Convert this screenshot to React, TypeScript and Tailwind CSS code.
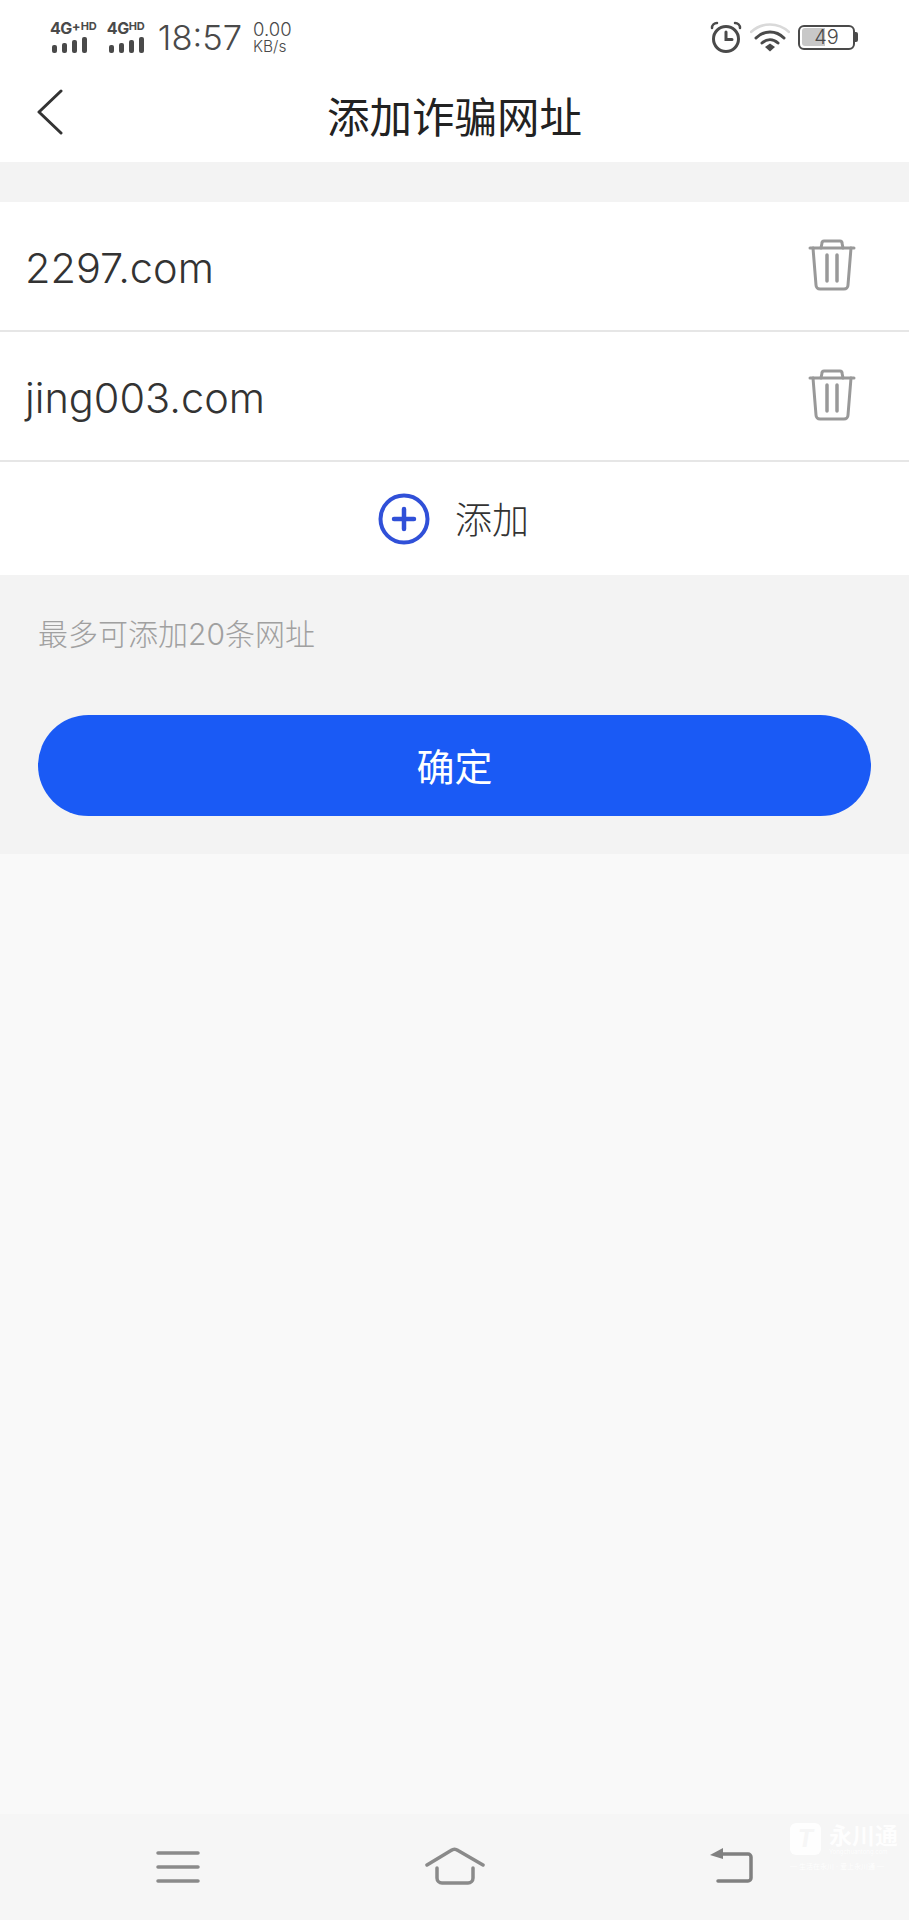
const cjk = { fontFamily: 'Inter, "Noto Sans CJK SC", sans-serif' };

function SignalBars() {
  return (
    <div className="mt-[1px] ml-[2px] flex items-end gap-[5px]">
      <span className="h-[8px] w-[5px] rounded-[2px] bg-[#4a4a4a]" />
      <span className="h-[10px] w-[5px] rounded-[2px] bg-[#4a4a4a]" />
      <span className="h-[13px] w-[5px] rounded-[2px] bg-[#4a4a4a]" />
      <span className="h-[16px] w-[5px] rounded-[2px] bg-[#4a4a4a]" />
    </div>
  );
}

function NetworkBadge({ plus }: { plus?: boolean }) {
  return (
    <div className="flex flex-col font-bold leading-none text-[#4a4a4a]">
      <div className="flex h-[15px] items-start">
        <span className="text-[16px] leading-[15px] tracking-[-0.5px]">4G</span>
        {plus && <span className="text-[13px] leading-[10px]">+</span>}
        <span className="text-[11px] leading-[10px]">HD</span>
      </div>
      <SignalBars />
    </div>
  );
}

function TrashIcon() {
  return (
    <svg width="48" height="52" viewBox="0 0 48 52" fill="none" stroke="#999999" strokeWidth="3" strokeLinecap="round" strokeLinejoin="round">
      <path d="M2 9h44" />
      <path d="M13 9l1-5a2 2 0 0 1 2-2h16a2 2 0 0 1 2 2l1 5" />
      <path d="M5 9l3 37a4 4 0 0 0 4 4h24a4 4 0 0 0 4-4l3-37" />
      <path d="M19 16v26M29 16v26" strokeWidth="3.500" />
    </svg>
  );
}

function UrlRow({ url }: { url: string }) {
  return (
    <div className="flex h-[128px] items-center justify-between bg-white pr-[53px] pl-[25px]">
      <span className="mt-[4px] text-[41.5px] font-light text-[#333333]">{url}</span>
      <div className="-mt-[2px]">
        <TrashIcon />
      </div>
    </div>
  );
}

export default function App() {
  return (
    <div className="flex h-[1920px] w-[909px] flex-col overflow-hidden bg-[#f9f9f9]" style={cjk}>
      <header className="bg-white">
        <div className="flex h-[72px] items-center pt-[2px] pr-[51px] pl-[50px]">
          <div className="flex items-center gap-[10px]">
            <NetworkBadge plus />
            <NetworkBadge />
          </div>
          <span className="mt-[3px] ml-[13px] text-[34.5px] leading-none font-light text-[#4a4a4a]">18:57</span>
          <div className="ml-[11px] flex flex-col gap-[1px] font-light text-[#4a4a4a]">
            <span className="text-[18.5px] leading-[17px]">0.00</span>
            <span className="text-[15.5px] leading-[15px]">KB/s</span>
          </div>
          <div className="ml-auto flex items-center gap-[8px]">
            <svg width="32" height="32" viewBox="0 0 32 32" fill="none" stroke="#4a4a4a" strokeWidth="3" strokeLinecap="round">
              <circle cx="16" cy="18" r="12.5" />
              <path d="M16 11v7.5h6" />
              <path d="M2 7a5 5 0 0 1 5-5M30 7a5 5 0 0 0-5-5" strokeWidth="2.5" />
            </svg>
            <svg width="40" height="30" viewBox="0 0 40 30" fill="none" strokeLinecap="round">
              <path d="M1 10C12 0 28 0 39 10" stroke="#d9d9d9" strokeWidth="2.5" />
              <path d="M6 16C14 8 26 8 34 16" stroke="#4a4a4a" strokeWidth="3" />
              <path d="M12 21c5-4.5 11-4.5 16 0" stroke="#4a4a4a" strokeWidth="3" />
              <path d="M15 25l5-3.5 5 3.5-5 4.5z" fill="#4a4a4a" />
            </svg>
            <div className="flex items-center">
              <div className="relative flex h-[25px] w-[57px] items-center justify-center overflow-hidden rounded-[6px] border-[2.5px] border-[#4a4a4a]">
                <span className="absolute top-[1.5px] bottom-[1.5px] left-[1.5px] w-[23px] rounded-l-[3px] bg-[#c8c8c8]" />
                <span className="relative text-[20px] leading-none font-light text-[#4a4a4a]">49</span>
              </div>
              <span className="h-[10px] w-[3px] rounded-r-[2px] bg-[#4a4a4a]" />
            </div>
          </div>
        </div>
        <div className="relative flex h-[90px] items-center justify-center">
          <svg className="absolute top-[17px] left-[37px]" width="26" height="46" viewBox="0 0 26 46" fill="none" stroke="#333333" strokeWidth="3" strokeLinecap="round" strokeLinejoin="round">
            <path d="M24 2L2 23l22 21" />
          </svg>
          <h1 className="mt-[3px] text-[42.5px] leading-none font-normal text-[#222222]">添加诈骗网址</h1>
        </div>
      </header>

      <section className="flex h-[692px] flex-col bg-[#f3f3f3] pt-[40px]">
        <UrlRow url="2297.com" />
        <div className="h-[2px] bg-[#e6e6e6]" />
        <UrlRow url="jing003.com" />
        <div className="h-[2px] bg-[#e6e6e6]" />
        <div className="flex h-[113px] items-center justify-center gap-[25px] bg-white pr-[2px]">
          <svg width="52" height="52" viewBox="0 0 52 52" fill="none" stroke="#3050d8" strokeLinecap="round">
            <circle cx="26" cy="26" r="23.5" strokeWidth="4" />
            <path d="M16 26h20M26 16v20" strokeWidth="4.500" />
          </svg>
          <span className="mt-[3px] text-[37px] leading-none font-light text-[#333333]">添加</span>
        </div>
        <p className="mt-[41px] pl-[38px] text-[30px] leading-[36px] font-light text-[#a0a0a0]">最多可添加20条网址</p>
        <button type="button" className="mx-[38px] mt-[63px] flex h-[101px] items-center justify-center rounded-full bg-[#1a5af5] pt-[3px] text-[38px] text-white">
          确定
        </button>
      </section>

      <div className="flex-1" />

      <nav className="relative flex h-[106px] items-start bg-[#f6f6f6]">
        <svg className="absolute top-[37px] left-[156px]" width="44" height="32" viewBox="0 0 44 32" fill="none" stroke="#8a8a8a" strokeWidth="3.500" strokeLinecap="round">
          <path d="M2 2h40M2 16h40M2 30h40" />
        </svg>
        <svg className="absolute top-[33px] left-[425px]" width="60" height="38" viewBox="0 0 60 38" fill="none" stroke="#8a8a8a" strokeWidth="3.500" strokeLinecap="round" strokeLinejoin="round">
          <path d="M2 18L26 3.5a6 6 0 0 1 7 0L58 18" />
          <path d="M12 21v10a5 5 0 0 0 5 5h26a5 5 0 0 0 5-5V21" />
        </svg>
        <svg className="absolute top-[33px] left-[708px]" width="48" height="38" viewBox="0 0 48 38" fill="none">
          <path d="M14 7h26a3 3 0 0 1 3 3v21a3 3 0 0 1-3 3H10" stroke="#808080" strokeWidth="3.500" strokeLinecap="round" />
          <path d="M2 8L15 1v11z" fill="#808080" />
        </svg>
        <div className="absolute top-[9px] left-[790px] flex flex-col items-start text-white opacity-90">
          <div className="flex items-center gap-[8px]">
            <span className="flex h-[32px] w-[31px] items-center justify-center rounded-[6px] bg-white text-[24px] leading-none font-bold text-[#f6f6f6] italic">T</span>
            <div className="flex flex-col">
              <span className="text-[23px] leading-[24px] font-bold">永川通</span>
              <span className="text-[6px] leading-[7px]">Yongchuantong.com</span>
            </div>
          </div>
          <span className="mt-[8px] text-[7px] leading-none">— 生活在永川 · 爱上永川通 —</span>
        </div>
      </nav>
    </div>
  );
}
